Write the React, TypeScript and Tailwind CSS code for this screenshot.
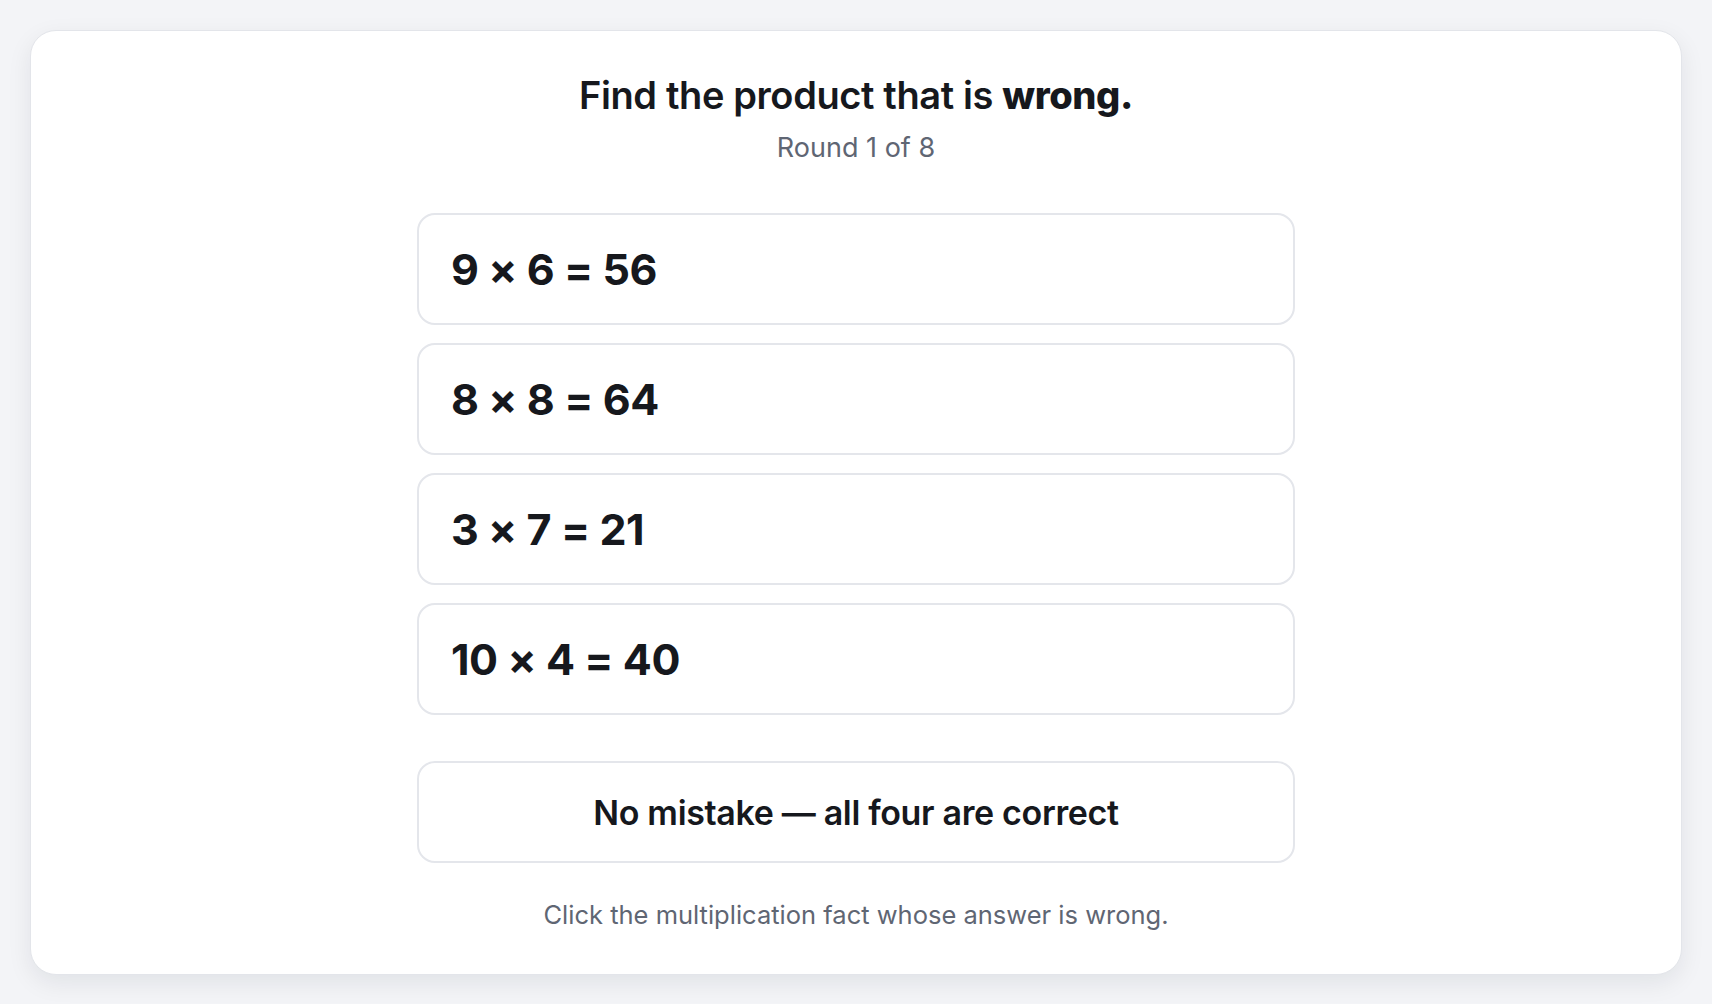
const facts = ['9 × 6 = 56', '8 × 8 = 64', '3 × 7 = 21', '10 × 4 = 40'];

export default function App() {
  return (
    <div
      className="min-h-screen bg-[#f3f4f7] p-[30px] text-[#16181d]"
      style={{ fontFamily: 'Inter, "Noto Sans", sans-serif' }}
    >
      <div className="flex h-[945px] flex-col items-center rounded-[26px] border border-[#e3e5ea] bg-white pt-[42px] shadow-[0_8px_24px_rgba(15,23,42,0.08)]">
        <h1 className="text-[38px] leading-[44px] font-semibold tracking-[-0.01em]">
          Find the product that is <strong className="font-extrabold">wrong.</strong>
        </h1>
        <p className="mt-[14px] text-[27px] leading-[34px] text-[#5f6673]">Round 1 of 8</p>

        <div className="mt-[48px] flex w-[878px] flex-col gap-[18px]">
          {facts.map((f) => (
            <button
              key={f}
              className="flex h-[112px] items-center rounded-[18px] border-2 border-[#e4e6eb] bg-white px-[32px] text-left text-[43px] font-bold tracking-[-0.01em]"
            >
              {f}
            </button>
          ))}
        </div>

        <button className="mt-[46px] flex h-[102px] w-[878px] items-center justify-center rounded-[18px] border-2 border-[#e4e6eb] bg-white text-[34px] font-semibold tracking-[-0.01em]">
          No mistake — all four are correct
        </button>

        <p className="mt-[36px] text-[25.5px] leading-[32px] text-[#5f6673]">
          Click the multiplication fact whose answer is wrong.
        </p>
      </div>
    </div>
  );
}
